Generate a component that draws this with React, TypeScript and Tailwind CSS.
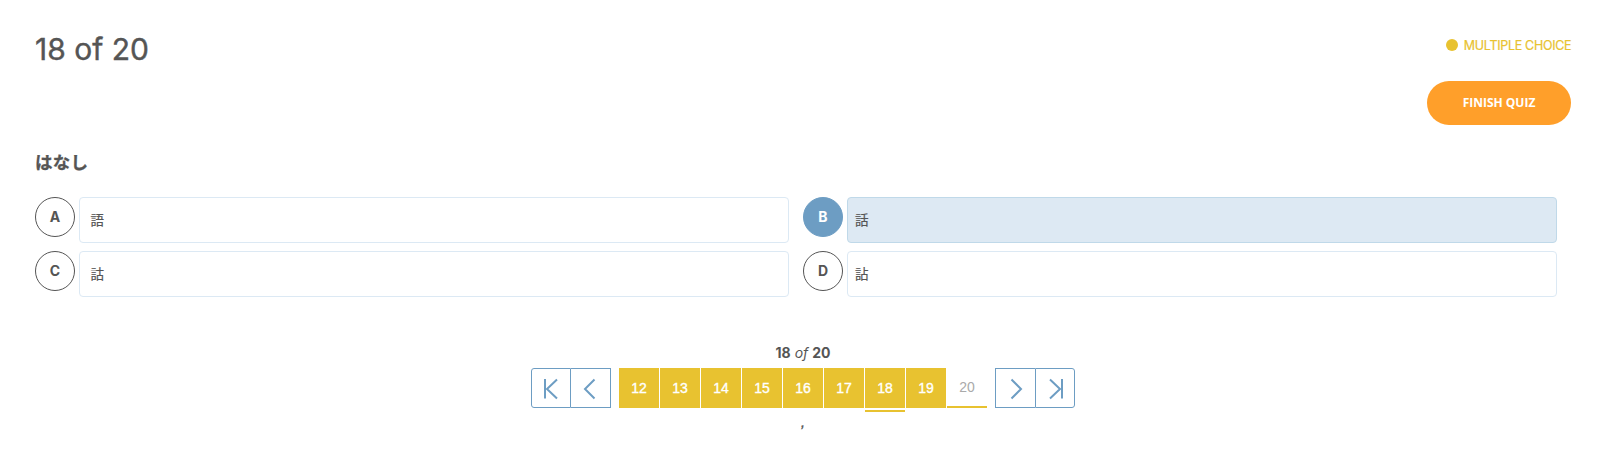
import React from "react";

type Choice = { letter: string; text: string; selected?: boolean };

const choices: Choice[] = [
  { letter: "A", text: "語" },
  { letter: "B", text: "話", selected: true },
  { letter: "C", text: "詁" },
  { letter: "D", text: "詀" },
];

const answered = [12, 13, 14, 15, 16, 17, 18, 19];

function Option({ choice, index }: { choice: Choice; index: number }) {
  return (
    <div className="flex gap-1">
      <div
        className={`flex size-10 shrink-0 items-center justify-center rounded-full border pb-px text-[14px] font-bold ${
          choice.selected
            ? "border-[#6d9dc3] bg-[#6d9dc3] text-white"
            : "border-[#555] bg-white text-[#555]"
        }`}
      >
        {choice.letter}
      </div>
      <div
        className={`flex h-[46px] w-[710px] items-center rounded-[4px] border pb-[2px] text-[13.5px] font-['Noto_Sans_CJK_JP',sans-serif] [-webkit-text-stroke:0.2px_#555] ${
          index % 2 === 0 ? "pl-[10.5px]" : "pl-[7px]"
        } ${choice.selected ? "border-[#c0d9e9] bg-[#dde9f3]" : "border-[#dce9f4] bg-white"}`}
      >
        {choice.text}
      </div>
    </div>
  );
}

function Arrow({ label, path, className }: { label: string; path: string; className: string }) {
  return (
    <button aria-label={label} className={`flex h-10 w-10 items-start border-[#6d9dc3] ${className}`}>
      <svg viewBox="0 0 38 38" className="size-[38px] shrink-0" fill="none" stroke="#6d9dc3" strokeWidth="2">
        <path d={path} />
      </svg>
    </button>
  );
}

export default function App() {
  return (
    <main className="h-[463px] w-[1617px] overflow-hidden bg-white pl-[35px] pr-[46px] pt-[29px] font-['Inter','Noto_Sans_CJK_JP',sans-serif] text-[#555]">
      <header className="flex h-24 justify-between">
        <h1 className="h-10 text-[30px] leading-[40px] [-webkit-text-stroke:0.4px_#555]">18 of 20</h1>
        <div className="flex flex-col items-end">
          <div className="mt-[6px] flex h-5 items-center gap-[6px] text-[12.5px] tracking-[-0.3px] text-[#e8c230]">
            <span className="size-3 rounded-full bg-[#e8c230]" />
            <span className="-mr-[0.3px] pt-[2px] [-webkit-text-stroke:0.2px_#e8c230]">MULTIPLE CHOICE</span>
          </div>
          <button className="mt-[26px] h-11 w-36 rounded-full bg-[#ff9f2a] font-['Open_Sans',sans-serif] text-[12px] font-bold text-white">
            FINISH QUIZ
          </button>
        </div>
      </header>

      <h2 className="mt-[23px] h-[29px] text-[17.5px] font-bold leading-[28px] tracking-[0.2px] font-['Noto_Sans_CJK_JP',sans-serif] [-webkit-text-stroke:0.3px_#555]">はなし</h2>

      <section className="mt-5 grid grid-cols-[754px_754px] gap-x-[14px] gap-y-2">
        {choices.map((choice, index) => (
          <Option key={choice.letter} choice={choice} index={index} />
        ))}
      </section>

      <footer className="-ml-[35px] mt-[45px] flex w-[1606px] flex-col items-center font-['Liberation_Sans',sans-serif]">
        <p className="h-[26px] font-['Inter',sans-serif] text-[14px] leading-[21px]">
          <b>18</b> <i>of</i> <b>20</b>
        </p>
        <nav className="flex h-11 gap-2">
          <div className="flex">
            <Arrow label="First" path="M13 10v19.500M25 10.500L15 20l10 9.500" className="rounded-l-[3px] border" />
            <Arrow label="Previous" path="M23.500 10.500L14 20l9.500 9.500" className="border-y border-r" />
          </div>
          <div className="flex gap-px text-[14px]">
            {answered.map((n) => (
              <div key={n}>
                <div className="flex size-10 items-center justify-center bg-[#e8c230] text-white [-webkit-text-stroke:0.35px_white]">{n}</div>
                {n === 18 && <div className="mt-[2px] h-[2px] bg-[#e8c230]" />}
              </div>
            ))}
            <div className="flex size-10 items-center justify-center border-b-2 border-[#e8c230] text-[#aaa]">20</div>
          </div>
          <div className="flex">
            <Arrow label="Next" path="M15.500 10.500L25 20l-9.500 9.500" className="border-y border-l" />
            <Arrow label="Last" path="M14 10.500L24 20l-10 9.500M26 10v19.500" className="rounded-r-[3px] border" />
          </div>
        </nav>
        <p className="h-5 text-[14px] italic leading-5 [-webkit-text-stroke:0.4px_#555]">,</p>
      </footer>
    </main>
  );
}
